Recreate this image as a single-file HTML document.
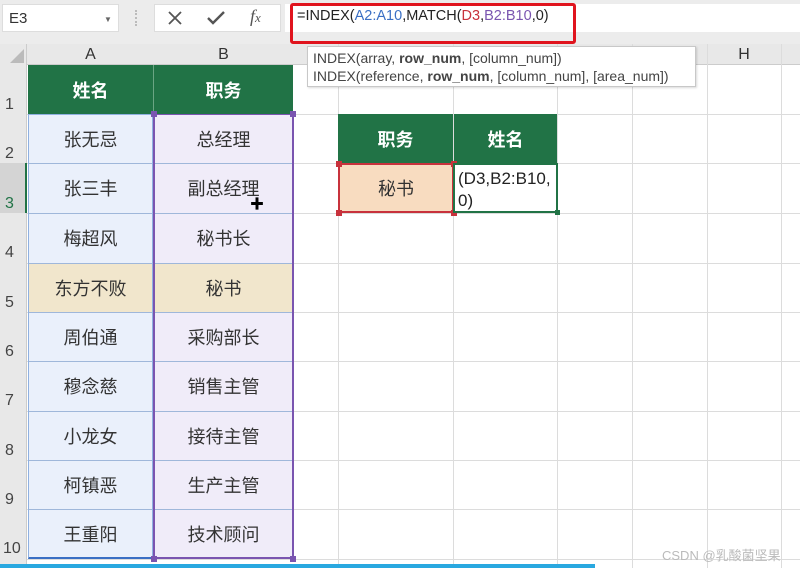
<!DOCTYPE html>
<html><head><meta charset="utf-8"><style>
*{margin:0;padding:0;box-sizing:border-box}
body{width:800px;height:568px;overflow:hidden;background:#fff;position:relative;font-family:"Liberation Sans","Noto Sans CJK SC",sans-serif;color:#333}
.a{position:absolute}
.c{position:absolute;display:flex;align-items:center;justify-content:center;font-size:18px;color:#333}
.rh{position:absolute;left:0;width:27px;font-size:16px;color:#444;text-align:left;padding-left:5px}
.vl{position:absolute;top:44px;width:1px;height:524px;background:#dcdcdc}
.hl{position:absolute;left:27px;right:0;height:1px;background:#dcdcdc}
.ch{position:absolute;top:44px;height:21px;font-size:16px;color:#333;text-align:center;line-height:22px}
.h{position:absolute;width:6px;height:6px;background:#7a55b0}
</style></head><body>
<div class="a" style="left:0;top:0;width:800px;height:44px;background:#ececec"></div>
<div class="a" style="left:2px;top:4px;width:117px;height:28px;background:#fff;border:1px solid #ddd;font-size:15px;padding:5px 6px">E3</div>
<div class="a" style="left:104px;top:15px;font-size:8px;color:#666">▼</div>
<div class="a" style="left:135px;top:10px;width:3px;height:16px;border-left:2px dotted #bbb"></div>
<div class="a" style="left:154px;top:4px;width:127px;height:28px;background:#fff;border:1px solid #ddd"></div>
<svg class="a" style="left:166px;top:10px" width="18" height="16"><path d="M3 2L15 14M15 2L3 14" stroke="#555" stroke-width="1.8"/></svg>
<svg class="a" style="left:206px;top:10px" width="20" height="16"><path d="M2 8L7 13L18 2" stroke="#555" stroke-width="2.4" fill="none"/></svg>
<div class="a" style="left:250px;top:6px;font-family:'Liberation Serif',serif;font-style:italic;font-size:18px;color:#555">f<span style="font-size:13px">x</span></div>
<div class="a" style="left:285px;top:4px;width:515px;height:28px;background:#fff"></div>
<div class="a" style="left:290px;top:3px;width:286px;height:41px;border:3px solid #e0141e;border-radius:3px"></div>
<div class="a" style="left:297px;top:8px;font-size:14.5px;color:#222;white-space:nowrap">=INDEX(<span style="color:#3a6fc4">A2:A10</span>,MATCH(<span style="color:#c8323c">D3</span>,<span style="color:#7a55b0">B2:B10</span>,0)</div>
<div class="a" style="left:0;top:44px;width:800px;height:21px;background:#e8e8e8;border-bottom:1px solid #ccc"></div>
<div class="a" style="left:0;top:44px;width:27px;height:524px;background:#e8e8e8;border-right:1px solid #ccc"></div>
<svg class="a" style="left:10px;top:49px" width="14" height="14"><path d="M14 0L14 14L0 14Z" fill="#bbb"/></svg>
<div class="ch" style="left:27px;width:127px">A</div>
<div class="ch" style="left:154px;width:139px">B</div>
<div class="ch" style="left:707px;width:74px">H</div>
<div class="a" style="left:0;top:163px;width:27px;height:50px;background:#d4d4d4;border-right:2px solid #217346"></div>
<div class="vl" style="left:338px"></div><div class="vl" style="left:453px"></div><div class="vl" style="left:557px"></div><div class="vl" style="left:632px"></div><div class="vl" style="left:707px"></div><div class="vl" style="left:781px"></div>
<div class="hl" style="top:114px"></div><div class="hl" style="top:163px"></div><div class="hl" style="top:213px"></div><div class="hl" style="top:263px"></div><div class="hl" style="top:312px"></div><div class="hl" style="top:361px"></div><div class="hl" style="top:411px"></div><div class="hl" style="top:460px"></div><div class="hl" style="top:509px"></div><div class="hl" style="top:559px"></div>
<div class="rh" style="top:96px">1</div><div class="rh" style="top:145px">2</div><div class="rh" style="top:195px;color:#217346">3</div><div class="rh" style="top:244px">4</div><div class="rh" style="top:294px">5</div><div class="rh" style="top:343px">6</div><div class="rh" style="top:392px">7</div><div class="rh" style="top:442px">8</div><div class="rh" style="top:491px">9</div><div class="rh" style="top:540px;padding-left:3px">10</div>
<div class="c" style="left:28px;top:65px;width:125px;height:49px;background:#217346;color:#fff;font-weight:bold">姓名</div>
<div class="c" style="left:154px;top:65px;width:139px;height:49px;background:#217346;color:#fff;font-weight:bold">职务</div>
<div class="a" style="left:153px;top:65px;width:1px;height:49px;background:#6aa583"></div>
<div class="a" style="left:28px;top:114px;width:125px;height:445px;background:#eaf0fb"></div>
<div class="a" style="left:154px;top:114px;width:139px;height:445px;background:#f0ecf9"></div>
<div class="a" style="left:28px;top:263px;width:265px;height:49px;background:#f1e6cc"></div>
<div class="a" style="left:28px;top:163px;width:265px;height:1px;background:#9fb7da"></div><div class="a" style="left:28px;top:213px;width:265px;height:1px;background:#9fb7da"></div><div class="a" style="left:28px;top:263px;width:265px;height:1px;background:#9fb7da"></div><div class="a" style="left:28px;top:312px;width:265px;height:1px;background:#9fb7da"></div><div class="a" style="left:28px;top:361px;width:265px;height:1px;background:#9fb7da"></div><div class="a" style="left:28px;top:411px;width:265px;height:1px;background:#9fb7da"></div><div class="a" style="left:28px;top:460px;width:265px;height:1px;background:#9fb7da"></div><div class="a" style="left:28px;top:509px;width:265px;height:1px;background:#9fb7da"></div>
<div class="a" style="left:28px;top:114px;width:125px;height:445px;border:1px solid #8fb0e0;border-bottom:2px solid #3a6fc4"></div>
<div class="a" style="left:153px;top:114px;width:141px;height:445px;border:2px solid #7a55b0;border-top:1px solid #7a55b0"></div>
<div class="h" style="left:151px;top:111px"></div><div class="h" style="left:290px;top:111px"></div><div class="h" style="left:151px;top:556px"></div><div class="h" style="left:290px;top:556px"></div>
<div class="c" style="left:28px;top:114px;width:125px;height:49px">张无忌</div><div class="c" style="left:154px;top:114px;width:139px;height:49px">总经理</div>
<div class="c" style="left:28px;top:163px;width:125px;height:50px">张三丰</div><div class="c" style="left:154px;top:163px;width:139px;height:50px">副总经理</div>
<div class="c" style="left:28px;top:213px;width:125px;height:50px">梅超风</div><div class="c" style="left:154px;top:213px;width:139px;height:50px">秘书长</div>
<div class="c" style="left:28px;top:263px;width:125px;height:49px">东方不败</div><div class="c" style="left:154px;top:263px;width:139px;height:49px">秘书</div>
<div class="c" style="left:28px;top:312px;width:125px;height:49px">周伯通</div><div class="c" style="left:154px;top:312px;width:139px;height:49px">采购部长</div>
<div class="c" style="left:28px;top:361px;width:125px;height:50px">穆念慈</div><div class="c" style="left:154px;top:361px;width:139px;height:50px">销售主管</div>
<div class="c" style="left:28px;top:411px;width:125px;height:49px">小龙女</div><div class="c" style="left:154px;top:411px;width:139px;height:49px">接待主管</div>
<div class="c" style="left:28px;top:460px;width:125px;height:49px">柯镇恶</div><div class="c" style="left:154px;top:460px;width:139px;height:49px">生产主管</div>
<div class="c" style="left:28px;top:509px;width:125px;height:50px">王重阳</div><div class="c" style="left:154px;top:509px;width:139px;height:50px">技术顾问</div>
<div class="a" style="left:250px;top:194px;font-size:14px;color:#000">✚</div>
<div class="c" style="left:338px;top:114px;width:115px;height:49px;background:#217346;color:#fff;font-weight:bold">职务</div>
<div class="c" style="left:454px;top:114px;width:103px;height:49px;background:#217346;color:#fff;font-weight:bold">姓名</div>
<div class="c" style="left:338px;top:163px;width:116px;height:50px;background:#f8dcc0;border:2px solid #c8323c">秘书</div>
<div class="h" style="left:336px;top:161px;background:#c8323c"></div><div class="h" style="left:451px;top:161px;background:#c8323c"></div><div class="h" style="left:336px;top:210px;background:#c8323c"></div><div class="h" style="left:451px;top:210px;background:#c8323c"></div>
<div class="a" style="left:453px;top:163px;width:105px;height:50px;background:#fff;border:2px solid #217346;font-size:17px;line-height:22px;padding:3px 0 0 3px;color:#222">(D3,B2:B10,<br>0)</div>
<div class="a" style="left:555px;top:210px;width:5px;height:5px;background:#217346"></div>
<div class="a" style="left:307px;top:46px;width:389px;height:41px;background:#fff;border:1px solid #c8c8c8;box-shadow:1px 1px 2px rgba(0,0,0,.15);font-size:14px;line-height:18px;padding:2px 0 0 5px;color:#444;white-space:nowrap">INDEX(array, <b>row_num</b>, [column_num])<br>INDEX(reference, <b>row_num</b>, [column_num], [area_num])</div>
<div class="a" style="left:0;top:564px;width:595px;height:4px;background:#29a8e0"></div>
<div class="a" style="left:662px;top:545px;font-size:13px;color:#bbb">CSDN @乳酸菌坚果</div>
</body></html>
